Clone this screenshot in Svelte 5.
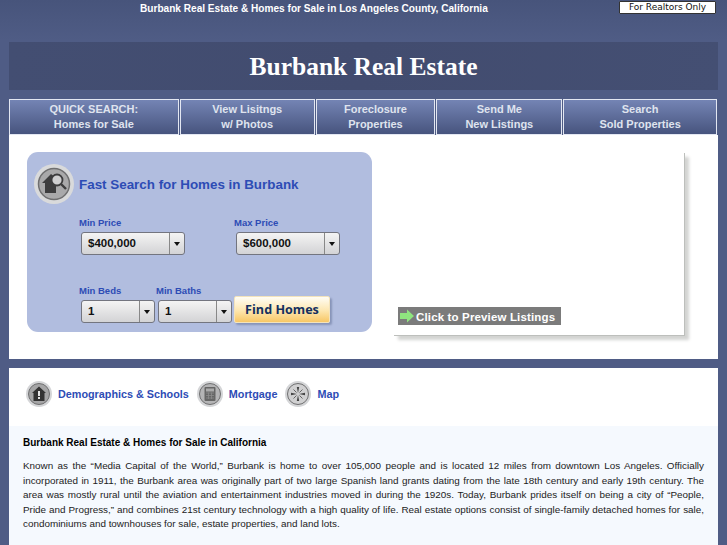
<script lang="ts">
  const navItems = [
    { top: 'QUICK SEARCH:', bottom: 'Homes for Sale', width: 170 },
    { top: 'View Lisitngs', bottom: 'w/ Photos', width: 135 },
    { top: 'Foreclosure', bottom: 'Properties', width: 120 },
    { top: 'Send Me', bottom: 'New Listings', width: 126 },
    { top: 'Search', bottom: 'Sold Properties', width: 154 }
  ];
</script>

{#snippet picker(value: string, kind: string)}
  <div class="picker {kind}">
    <span class="picker-value">{value}</span>
    <span class="picker-arrow"><i></i></span>
  </div>
{/snippet}

<div class="page">
  <header class="topbar">
    <h1 class="tagline">Burbank Real Estate &amp; Homes for Sale in Los Angeles County, California</h1>
    <a class="realtors" href="#realtors">For Realtors Only</a>
  </header>

  <div class="banner">Burbank Real Estate</div>

  <nav class="nav">
    {#each navItems as item}
      <a class="nav-item" href="#nav" style="width: {item.width}px">
        <span>{item.top}</span>
        <span>{item.bottom}</span>
      </a>
    {/each}
  </nav>

  <section class="hero">
    <form class="search">
      <div class="search-head">
        <svg class="round-icon big" viewBox="0 0 40 40" aria-hidden="true">
          <circle cx="20" cy="20" r="20" fill="#d9dadb" />
          <circle cx="20" cy="20" r="15.5" fill="#a9a9aa" stroke="#6f6f70" stroke-width="1.5" />
          <path d="M8 19 L17 10 L22 14 L22 29 L11 29 L11 19 Z" fill="#3d3d3e" />
          <circle cx="23" cy="16" r="5.5" fill="#cfcfd0" stroke="#3d3d3e" stroke-width="1.8" />
          <path d="M27 20 L32 25" stroke="#3d3d3e" stroke-width="2.4" />
        </svg>
        <h2>Fast Search for Homes in Burbank</h2>
      </div>

      <div class="price-row">
        <label class="field">
          <span>Min Price</span>
          {@render picker('$400,000', 'wide')}
        </label>
        <label class="field">
          <span>Max Price</span>
          {@render picker('$600,000', 'wide')}
        </label>
      </div>

      <div class="beds-row">
        <label class="field">
          <span>Min Beds</span>
          {@render picker('1', 'narrow')}
        </label>
        <label class="field">
          <span>Min Baths</span>
          {@render picker('1', 'narrow')}
        </label>
        <button class="find" type="button">Find Homes</button>
      </div>
    </form>

    <div class="preview">
      <a class="preview-link" href="#preview">
        <svg viewBox="0 0 14 14" width="14" height="14" aria-hidden="true">
          <path d="M0 4 H7 V0.5 L14 7 L7 13.5 V10 H0 Z" fill="#8fe57f" />
        </svg>
        <span class="preview-text">Click to Preview Listings</span>
      </a>
    </div>
  </section>

  <section class="details">
    <div class="tabs">
      <a class="tab" href="#demo">
        <svg class="round-icon" viewBox="0 0 26 26" aria-hidden="true">
          <circle cx="13" cy="13" r="13" fill="#d4d5d7" />
          <circle cx="13" cy="13" r="10.5" fill="#a5a5a6" stroke="#6f6f70" />
          <path d="M13 5.5 L20 12 H18.5 V20 H7.5 V12 H6 Z" fill="#333" />
          <path d="M12 10 H14 V15 H12 Z M12 16 H14 V18 H12 Z" fill="#e6e6e6" />
        </svg>
        Demographics &amp; Schools
      </a>
      <a class="tab" href="#mortgage">
        <svg class="round-icon" viewBox="0 0 26 26" aria-hidden="true">
          <circle cx="13" cy="13" r="13" fill="#d4d5d7" />
          <circle cx="13" cy="13" r="10.5" fill="#b4b4b5" stroke="#6f6f70" />
          <rect x="7.5" y="6" width="11" height="14" rx="1" fill="#666" />
          <rect x="9" y="7.5" width="8" height="3" fill="#aaa" />
          <path d="M9 12 H17 M9 14.5 H17 M9 17 H17 M11.5 11.5 V18 M14.5 11.5 V18" stroke="#8c8c8c" stroke-width="0.8" />
        </svg>
        Mortgage
      </a>
      <a class="tab" href="#map">
        <svg class="round-icon" viewBox="0 0 26 26" aria-hidden="true">
          <circle cx="13" cy="13" r="13" fill="#d4d5d7" />
          <circle cx="13" cy="13" r="10.5" fill="#d0d0d1" stroke="#6f6f70" />
          <path d="M13 12 L11.8 6 H14.2 Z M13 14 L14.2 20 H11.8 Z M12 13 L6 14.2 V11.8 Z M14 13 L20 11.8 V14.2 Z" fill="#444" />
          <path d="M8.5 8.5 L11.5 11.5 M14.5 14.5 L17.5 17.5 M17.5 8.5 L14.5 11.5 M11.5 14.5 L8.5 17.5" stroke="#666" stroke-width="1" />
        </svg>
        Map
      </a>
    </div>

    <div class="about">
      <h3>Burbank Real Estate &amp; Homes for Sale in California</h3>
      <p>
        Known as the “Media Capital of the World,” Burbank is home to over 105,000 people and is
        located 12 miles from downtown Los Angeles. Officially incorporated in 1911, the Burbank
        area was originally part of two large Spanish land grants dating from the late 18th century
        and early 19th century. The area was mostly rural until the aviation and entertainment
        industries moved in during the 1920s. Today, Burbank prides itself on being a city of
        “People, Pride and Progress,” and combines 21st century technology with a high quality of
        life. Real estate options consist of single-family detached homes for sale, condominiums and
        townhouses for sale, estate properties, and land lots.
      </p>
    </div>
  </section>
</div>

<style>
  :global(body) {
    background: #4f5c85;
    font-family: 'Liberation Sans', Arial, sans-serif;
    overflow: hidden;
  }

  .page {
    width: 727px;
    height: 545px;
    overflow: hidden;
    box-sizing: border-box;
    padding-left: 9px;
    background: linear-gradient(#47547b, #4f5c85 40px);
  }

  .topbar {
    display: flex;
    height: 42px;
    width: 709px;
    position: relative;
  }

  .tagline {
    margin: 2px 0 0 131px;
    font-size: 10.1px;
    line-height: 13px;
    font-weight: bold;
    color: #fff;
    white-space: nowrap;
  }

  .realtors {
    position: absolute;
    left: 610px;
    top: 1px;
    width: 97px;
    height: 13px;
    box-sizing: border-box;
    background: #fff;
    border: 1px solid #333;
    border-radius: 1px;
    font-family: 'DejaVu Sans', sans-serif;
    font-size: 9px;
    line-height: 11px;
    text-align: center;
    color: #111;
    text-decoration: none;
  }

  .banner {
    width: 709px;
    height: 48px;
    background: linear-gradient(100deg, #434e72, #424c6f 50%, #444f73);
    font-family: 'Liberation Serif', 'Times New Roman', serif;
    font-size: 25.5px;
    font-weight: bold;
    line-height: 49px;
    text-align: center;
    color: #fff;
  }

  .nav {
    display: flex;
    width: 709px;
    margin-top: 9px;
    height: 36px;
  }

  .nav-item {
    box-sizing: border-box;
    height: 36px;
    margin-right: 1px;
    border: 1px solid #e3e7f2;
    background: linear-gradient(#7484b4, #47547e);
    display: flex;
    flex-direction: column;
    align-items: center;
    justify-content: center;
    color: #dfe3ee;
    font-size: 11px;
    font-weight: bold;
    line-height: 15.5px;
    text-decoration: none;
  }

  .hero {
    width: 709px;
    height: 224px;
    box-sizing: border-box;
    padding: 17px 0 0 18px;
    background: #fff;
    display: flex;
    gap: 21px;
  }

  .search {
    width: 345px;
    height: 180px;
    box-sizing: border-box;
    padding: 12px 0 0 7px;
    background: #b1bddf;
    border-radius: 11px;
  }

  .search-head {
    display: flex;
    align-items: center;
    gap: 5px;
  }

  .search-head h2 {
    margin: 0;
    font-size: 13.4px;
    font-weight: bold;
    color: #2d4cb5;
    white-space: nowrap;
  }

  .round-icon {
    display: block;
    width: 26px;
    height: 26px;
    flex: none;
  }

  .round-icon.big {
    width: 40px;
    height: 40px;
  }

  .price-row {
    display: flex;
    gap: 49px;
    margin: 13px 0 0 45px;
  }

  .beds-row {
    display: flex;
    align-items: flex-end;
    gap: 1px;
    margin: 30px 0 0 45px;
  }

  .field {
    display: flex;
    flex-direction: column;
    gap: 4px;
  }

  .field > span {
    font-size: 9.5px;
    line-height: 11px;
    font-weight: bold;
    color: #2d4cb5;
  }

  .picker {
    display: flex;
    box-sizing: border-box;
    margin-left: 2px;
    height: 23px;
    border: 1px solid #73757f;
    border-radius: 3px;
    background: linear-gradient(#f4f4f4, #d3d3d5);
    color: #111;
    font-size: 11.5px;
    font-weight: bold;
    line-height: 21px;
  }

  .picker.wide {
    width: 104px;
  }

  .picker.narrow {
    width: 74px;
  }

  .picker-value {
    flex: 1;
    padding-left: 6px;
  }

  .picker-arrow {
    width: 14px;
    border-left: 1px solid #888;
    display: flex;
    align-items: center;
    justify-content: center;
  }

  .picker-arrow i {
    width: 0;
    height: 0;
    border-left: 3.5px solid transparent;
    border-right: 3.5px solid transparent;
    border-top: 4px solid #111;
  }

  .find {
    width: 96px;
    height: 27px;
    margin: 0 0 0 1px;
    padding: 0;
    border: 1px solid #f3e3bb;
    border-radius: 2px;
    background: linear-gradient(#fffdf5, #fde6ae 55%, #f8c765);
    box-shadow: 2px 2px 2px #8794b8;
    color: #14305f;
    font-family: 'Open Sans', sans-serif;
    font-size: 12.6px;
    font-weight: 700;
  }

  .preview {
    width: 291px;
    height: 183px;
    box-sizing: border-box;
    padding: 0 0 10px 5px;
    display: flex;
    align-items: flex-end;
    background: #fff;
    box-shadow: 1px 1px 0 #bdbfbc, 5px 5px 3px #d3d4d2;
  }

  .preview-link {
    display: flex;
    align-items: center;
    gap: 2px;
    width: 163px;
    height: 18px;
    box-sizing: border-box;
    padding-left: 2px;
    background: #7b7b7b;
    color: #fff;
    font-size: 11.5px;
    font-weight: bold;
    letter-spacing: 0.15px;
    white-space: nowrap;
    text-decoration: none;
  }

  .preview-text {
    padding-top: 2px;
  }

  .details {
    width: 709px;
    margin-top: 9px;
    background: #fff;
  }

  .tabs {
    display: flex;
    height: 58px;
    box-sizing: border-box;
    padding: 13px 0 0 17px;
    gap: 8px;
  }

  .tab {
    display: flex;
    align-items: center;
    height: 26px;
    gap: 6px;
    color: #2d4cb5;
    font-size: 10.8px;
    font-weight: bold;
    text-decoration: none;
    white-space: nowrap;
  }

  .about {
    background: #f5f9fe;
    padding: 10px 14px 0;
    height: 119px;
  }

  .about h3 {
    margin: 0;
    font-size: 10px;
    line-height: 14px;
    color: #000;
  }

  .about p {
    margin: 9px 0 0;
    font-size: 9.9px;
    line-height: 14.6px;
    color: #222;
    text-align: justify;
  }
</style>
